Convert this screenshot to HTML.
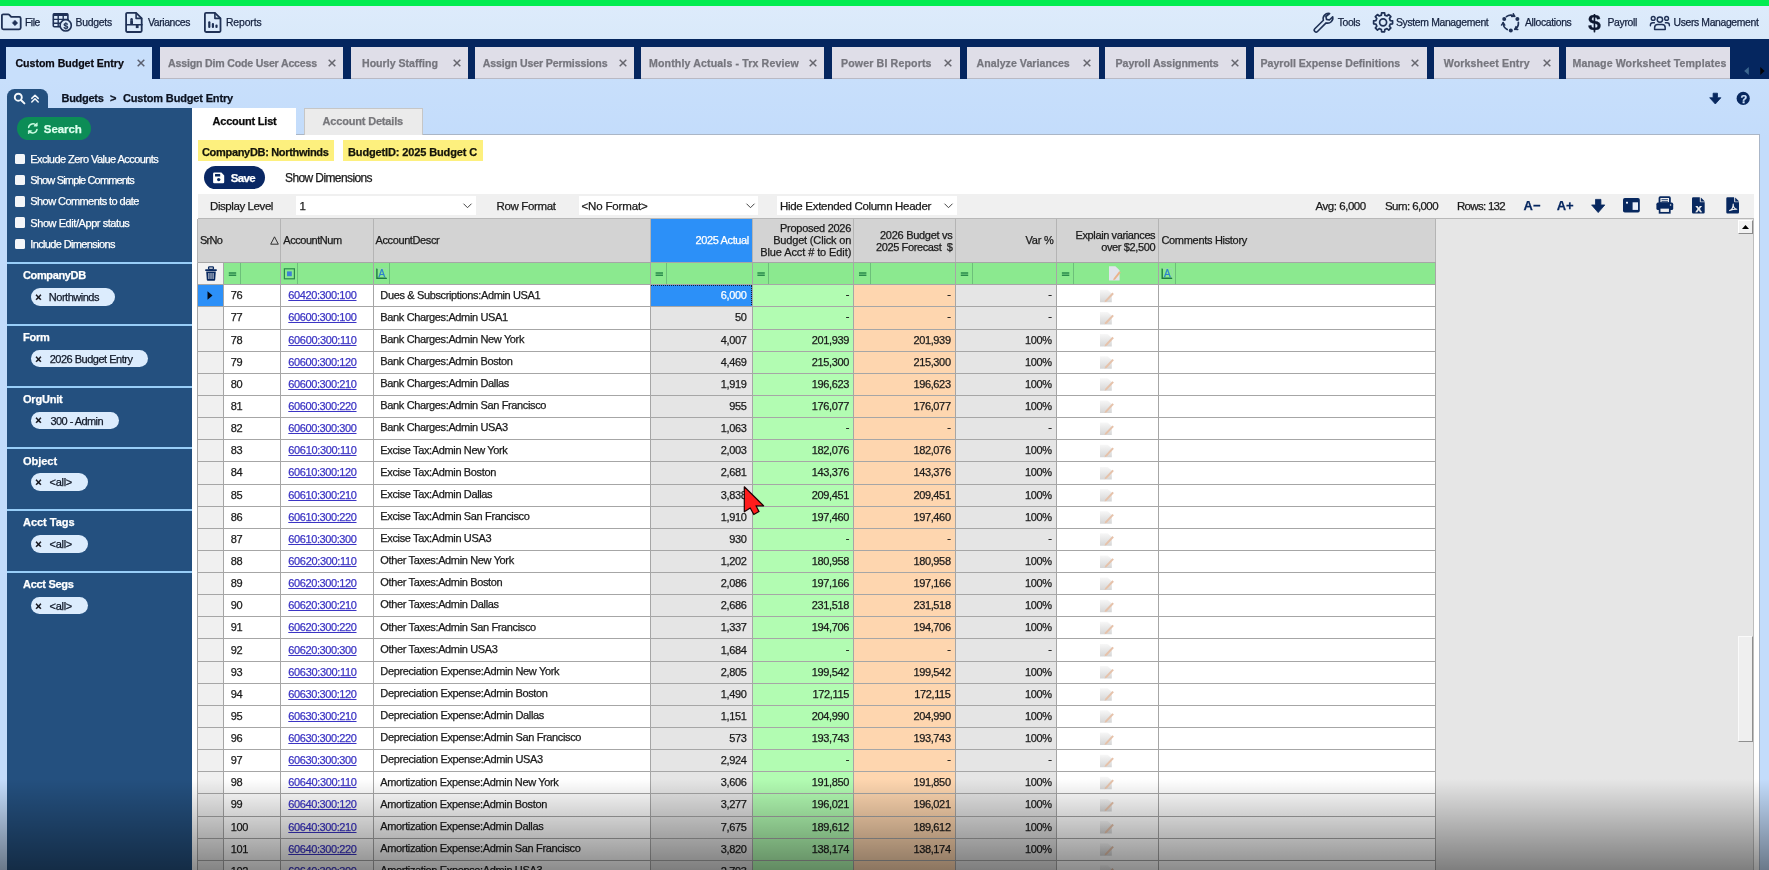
<!DOCTYPE html>
<html lang="en"><head><meta charset="utf-8"><title>Custom Budget Entry</title>
<style>
html,body{margin:0;padding:0;}
body{width:1769px;height:870px;overflow:hidden;position:relative;background:#c3dcf8;font-family:"Liberation Sans",sans-serif;will-change:transform;}
.t{position:absolute;white-space:pre;-webkit-text-stroke:0.25px currentColor;}
.r{position:absolute;box-sizing:border-box;}
svg{position:absolute;overflow:visible;}
a.t{text-decoration:underline;}
</style></head><body>
<div class="r" style="left:0.00px;top:0.00px;width:1769.00px;height:6.00px;background:#03ec50;"></div>
<div class="r" style="left:0.00px;top:6.00px;width:1769.00px;height:33.00px;background:linear-gradient(#ddebfb,#d9e9fa);"></div>
<span class="t " style="top:16.40px;font-size:10.4px;line-height:14.4px;color:#15223f;letter-spacing:-0.514px;left:25.00px;">File</span>
<span class="t " style="top:16.40px;font-size:10.4px;line-height:14.4px;color:#15223f;letter-spacing:-0.237px;left:75.50px;">Budgets</span>
<span class="t " style="top:16.40px;font-size:10.4px;line-height:14.4px;color:#15223f;letter-spacing:-0.386px;left:148.00px;">Variances</span>
<span class="t " style="top:16.40px;font-size:10.4px;line-height:14.4px;color:#15223f;letter-spacing:-0.130px;left:226.00px;">Reports</span>
<span class="t " style="top:16.40px;font-size:10.4px;line-height:14.4px;color:#15223f;letter-spacing:-0.355px;left:1337.70px;">Tools</span>
<span class="t " style="top:16.40px;font-size:10.4px;line-height:14.4px;color:#15223f;letter-spacing:-0.339px;left:1396.00px;">System Management</span>
<span class="t " style="top:16.40px;font-size:10.4px;line-height:14.4px;color:#15223f;letter-spacing:-0.345px;left:1525.00px;">Allocations</span>
<span class="t " style="top:16.40px;font-size:10.4px;line-height:14.4px;color:#15223f;letter-spacing:-0.327px;left:1607.50px;">Payroll</span>
<span class="t " style="top:16.40px;font-size:10.4px;line-height:14.4px;color:#15223f;letter-spacing:-0.359px;left:1673.50px;">Users Management</span>
<div class="r" style="left:0.00px;top:39.00px;width:1769.00px;height:40.00px;background:#05265f;"></div>
<div class="r" style="left:6.00px;top:46.50px;width:146.00px;height:32.50px;background:#c8dffb;"></div>
<span class="t " style="top:56.00px;font-size:10.6px;line-height:14.6px;color:#0c0c14;font-weight:bold;letter-spacing:-0.034px;left:15.50px;">Custom Budget Entry</span>
<svg style="left:136.5px;top:58.9px" width="8" height="8" viewBox="0 0 8 8"><path d="M0.7 0.7L7.3 7.3M7.3 0.7L0.7 7.3" stroke="#5a5f6e" stroke-width="1.5" fill="none"/></svg>
<div class="r" style="left:159.50px;top:46.50px;width:183.50px;height:32.50px;background:#dfdee8;border-bottom:1px solid #b9b9c4;"></div>
<span class="t " style="top:56.00px;font-size:10.6px;line-height:14.6px;color:#76767e;font-weight:bold;letter-spacing:-0.183px;left:168.00px;">Assign Dim Code User Access</span>
<svg style="left:327.8px;top:58.9px" width="8" height="8" viewBox="0 0 8 8"><path d="M0.7 0.7L7.3 7.3M7.3 0.7L0.7 7.3" stroke="#66666e" stroke-width="1.5" fill="none"/></svg>
<div class="r" style="left:351.00px;top:46.50px;width:117.00px;height:32.50px;background:#dfdee8;border-bottom:1px solid #b9b9c4;"></div>
<span class="t " style="top:56.00px;font-size:10.6px;line-height:14.6px;color:#76767e;font-weight:bold;left:362.00px;">Hourly Staffing</span>
<svg style="left:452.8px;top:58.9px" width="8" height="8" viewBox="0 0 8 8"><path d="M0.7 0.7L7.3 7.3M7.3 0.7L0.7 7.3" stroke="#66666e" stroke-width="1.5" fill="none"/></svg>
<div class="r" style="left:475.00px;top:46.50px;width:159.00px;height:32.50px;background:#dfdee8;border-bottom:1px solid #b9b9c4;"></div>
<span class="t " style="top:56.00px;font-size:10.6px;line-height:14.6px;color:#76767e;font-weight:bold;letter-spacing:-0.132px;left:482.70px;">Assign User Permissions</span>
<svg style="left:618.8px;top:58.9px" width="8" height="8" viewBox="0 0 8 8"><path d="M0.7 0.7L7.3 7.3M7.3 0.7L0.7 7.3" stroke="#66666e" stroke-width="1.5" fill="none"/></svg>
<div class="r" style="left:641.40px;top:46.50px;width:183.10px;height:32.50px;background:#dfdee8;border-bottom:1px solid #b9b9c4;"></div>
<span class="t " style="top:56.00px;font-size:10.6px;line-height:14.6px;color:#76767e;font-weight:bold;letter-spacing:0.133px;left:649.00px;">Monthly Actuals - Trx Review</span>
<svg style="left:808.8px;top:58.9px" width="8" height="8" viewBox="0 0 8 8"><path d="M0.7 0.7L7.3 7.3M7.3 0.7L0.7 7.3" stroke="#66666e" stroke-width="1.5" fill="none"/></svg>
<div class="r" style="left:831.70px;top:46.50px;width:128.30px;height:32.50px;background:#dfdee8;border-bottom:1px solid #b9b9c4;"></div>
<span class="t " style="top:56.00px;font-size:10.6px;line-height:14.6px;color:#76767e;font-weight:bold;letter-spacing:0.147px;left:841.00px;">Power BI Reports</span>
<svg style="left:944.4px;top:58.9px" width="8" height="8" viewBox="0 0 8 8"><path d="M0.7 0.7L7.3 7.3M7.3 0.7L0.7 7.3" stroke="#66666e" stroke-width="1.5" fill="none"/></svg>
<div class="r" style="left:967.40px;top:46.50px;width:131.20px;height:32.50px;background:#dfdee8;border-bottom:1px solid #b9b9c4;"></div>
<span class="t " style="top:56.00px;font-size:10.6px;line-height:14.6px;color:#76767e;font-weight:bold;letter-spacing:0.047px;left:976.50px;">Analyze Variances</span>
<svg style="left:1082.8px;top:58.9px" width="8" height="8" viewBox="0 0 8 8"><path d="M0.7 0.7L7.3 7.3M7.3 0.7L0.7 7.3" stroke="#66666e" stroke-width="1.5" fill="none"/></svg>
<div class="r" style="left:1105.40px;top:46.50px;width:140.60px;height:32.50px;background:#dfdee8;border-bottom:1px solid #b9b9c4;"></div>
<span class="t " style="top:56.00px;font-size:10.6px;line-height:14.6px;color:#76767e;font-weight:bold;letter-spacing:-0.071px;left:1115.60px;">Payroll Assignments</span>
<svg style="left:1230.8px;top:58.9px" width="8" height="8" viewBox="0 0 8 8"><path d="M0.7 0.7L7.3 7.3M7.3 0.7L0.7 7.3" stroke="#66666e" stroke-width="1.5" fill="none"/></svg>
<div class="r" style="left:1253.70px;top:46.50px;width:173.10px;height:32.50px;background:#dfdee8;border-bottom:1px solid #b9b9c4;"></div>
<span class="t " style="top:56.00px;font-size:10.6px;line-height:14.6px;color:#76767e;font-weight:bold;left:1260.50px;">Payroll Expense Definitions</span>
<svg style="left:1410.8px;top:58.9px" width="8" height="8" viewBox="0 0 8 8"><path d="M0.7 0.7L7.3 7.3M7.3 0.7L0.7 7.3" stroke="#66666e" stroke-width="1.5" fill="none"/></svg>
<div class="r" style="left:1434.00px;top:46.50px;width:124.60px;height:32.50px;background:#dfdee8;border-bottom:1px solid #b9b9c4;"></div>
<span class="t " style="top:56.00px;font-size:10.6px;line-height:14.6px;color:#76767e;font-weight:bold;letter-spacing:0.124px;left:1443.80px;">Worksheet Entry</span>
<svg style="left:1542.8px;top:58.9px" width="8" height="8" viewBox="0 0 8 8"><path d="M0.7 0.7L7.3 7.3M7.3 0.7L0.7 7.3" stroke="#66666e" stroke-width="1.5" fill="none"/></svg>
<div class="r" style="left:1566.00px;top:46.50px;width:163.80px;height:32.50px;background:#dfdee8;border-bottom:1px solid #b9b9c4;"></div>
<span class="t " style="top:56.00px;font-size:10.6px;line-height:14.6px;color:#76767e;font-weight:bold;letter-spacing:0.116px;left:1572.50px;">Manage Worksheet Templates</span>
<svg style="left:1742px;top:66px" width="24" height="10" viewBox="0 0 24 10"><path d="M6.8 1L6.8 9L2.2 5Z" fill="#3d6790"/><path d="M18.3 1L18.3 9L22.6 5Z" fill="#02040a"/></svg>
<div class="r" style="left:0.00px;top:79.00px;width:1769.00px;height:791.00px;background:linear-gradient(#c8dffb,#c3dcfb 60px,#c3dcfb);"></div>
<span class="t " style="top:91.10px;font-size:11px;line-height:15px;color:#0b1220;font-weight:bold;letter-spacing:-0.285px;left:61.50px;">Budgets</span>
<span class="t " style="top:91.10px;font-size:11px;line-height:15px;color:#0b1220;font-weight:bold;letter-spacing:1.075px;left:110.00px;">&gt;</span>
<span class="t " style="top:91.10px;font-size:11px;line-height:15px;color:#0b1220;font-weight:bold;letter-spacing:-0.161px;left:123.00px;">Custom Budget Entry</span>
<div class="r" style="left:7.00px;top:89.00px;width:40.50px;height:22.00px;background:#24507f;border-radius:7.5px 7.5px 0 0;"></div>
<div class="r" style="left:7.00px;top:108.00px;width:185.00px;height:762.00px;background:#24507f;"></div>
<div class="r" style="left:17.00px;top:117.00px;width:74.00px;height:22.80px;background:#0c8d56;border-radius:11.5px;"></div>
<span class="t " style="top:121.55px;font-size:11.5px;line-height:15.5px;color:#dcffee;font-weight:bold;letter-spacing:-0.059px;left:43.80px;">Search</span>
<div class="r" style="left:14.50px;top:153.50px;width:10.50px;height:10.50px;background:#f4f6f8;border-radius:1.5px;"></div>
<span class="t " style="top:151.80px;font-size:11px;line-height:15px;color:#fff;letter-spacing:-0.551px;left:30.30px;">Exclude Zero Value Accounts</span>
<div class="r" style="left:14.50px;top:174.75px;width:10.50px;height:10.50px;background:#f4f6f8;border-radius:1.5px;"></div>
<span class="t " style="top:173.05px;font-size:11px;line-height:15px;color:#fff;letter-spacing:-0.836px;left:30.30px;">Show Simple Comments</span>
<div class="r" style="left:14.50px;top:196.00px;width:10.50px;height:10.50px;background:#f4f6f8;border-radius:1.5px;"></div>
<span class="t " style="top:194.30px;font-size:11px;line-height:15px;color:#fff;letter-spacing:-0.573px;left:30.30px;">Show Comments to date</span>
<div class="r" style="left:14.50px;top:217.25px;width:10.50px;height:10.50px;background:#f4f6f8;border-radius:1.5px;"></div>
<span class="t " style="top:215.55px;font-size:11px;line-height:15px;color:#fff;letter-spacing:-0.434px;left:30.30px;">Show Edit/Appr status</span>
<div class="r" style="left:14.50px;top:238.50px;width:10.50px;height:10.50px;background:#f4f6f8;border-radius:1.5px;"></div>
<span class="t " style="top:236.80px;font-size:11px;line-height:15px;color:#fff;letter-spacing:-0.638px;left:30.30px;">Include Dimensions</span>
<div class="r" style="left:7.00px;top:262.00px;width:185.00px;height:2.00px;background:#98cef8;"></div>
<span class="t " style="top:268.30px;font-size:11px;line-height:15px;color:#fff;font-weight:bold;letter-spacing:-0.367px;left:23.00px;">CompanyDB</span>
<div class="r" style="left:31.00px;top:288.10px;width:84.00px;height:17.60px;background:#dcecfd;border-radius:9px;"></div>
<span class="t " style="top:289.80px;font-size:11px;line-height:15px;color:#0a0a12;font-weight:bold;left:35.20px;">×</span>
<span class="t " style="top:290.20px;font-size:11px;line-height:15px;color:#101828;letter-spacing:-0.482px;left:48.80px;">Northwinds</span>
<div class="r" style="left:7.00px;top:323.50px;width:185.00px;height:2.00px;background:#98cef8;"></div>
<span class="t " style="top:330.04px;font-size:11px;line-height:15px;color:#fff;font-weight:bold;letter-spacing:-0.250px;left:23.00px;">Form</span>
<div class="r" style="left:31.00px;top:349.84px;width:117.30px;height:17.60px;background:#dcecfd;border-radius:9px;"></div>
<span class="t " style="top:351.54px;font-size:11px;line-height:15px;color:#0a0a12;font-weight:bold;left:35.20px;">×</span>
<span class="t " style="top:351.94px;font-size:11px;line-height:15px;color:#101828;letter-spacing:-0.495px;left:49.70px;">2026 Budget Entry</span>
<div class="r" style="left:7.00px;top:385.50px;width:185.00px;height:2.00px;background:#98cef8;"></div>
<span class="t " style="top:391.78px;font-size:11px;line-height:15px;color:#fff;font-weight:bold;letter-spacing:-0.205px;left:23.00px;">OrgUnit</span>
<div class="r" style="left:31.00px;top:411.58px;width:87.60px;height:17.60px;background:#dcecfd;border-radius:9px;"></div>
<span class="t " style="top:413.28px;font-size:11px;line-height:15px;color:#0a0a12;font-weight:bold;left:35.20px;">×</span>
<span class="t " style="top:413.68px;font-size:11px;line-height:15px;color:#101828;letter-spacing:-0.563px;left:50.50px;">300 - Admin</span>
<div class="r" style="left:7.00px;top:447.00px;width:185.00px;height:2.00px;background:#98cef8;"></div>
<span class="t " style="top:453.52px;font-size:11px;line-height:15px;color:#fff;font-weight:bold;letter-spacing:-0.038px;left:23.00px;">Object</span>
<div class="r" style="left:31.00px;top:473.32px;width:57.30px;height:17.60px;background:#dcecfd;border-radius:9px;"></div>
<span class="t " style="top:475.02px;font-size:11px;line-height:15px;color:#0a0a12;font-weight:bold;left:35.20px;">×</span>
<span class="t " style="top:475.42px;font-size:11px;line-height:15px;color:#101828;letter-spacing:-0.271px;left:49.50px;">&lt;all&gt;</span>
<div class="r" style="left:7.00px;top:509.00px;width:185.00px;height:2.00px;background:#98cef8;"></div>
<span class="t " style="top:515.26px;font-size:11px;line-height:15px;color:#fff;font-weight:bold;letter-spacing:-0.028px;left:23.00px;">Acct Tags</span>
<div class="r" style="left:31.00px;top:535.06px;width:57.30px;height:17.60px;background:#dcecfd;border-radius:9px;"></div>
<span class="t " style="top:536.76px;font-size:11px;line-height:15px;color:#0a0a12;font-weight:bold;left:35.20px;">×</span>
<span class="t " style="top:537.16px;font-size:11px;line-height:15px;color:#101828;letter-spacing:-0.271px;left:49.50px;">&lt;all&gt;</span>
<div class="r" style="left:7.00px;top:570.50px;width:185.00px;height:2.00px;background:#98cef8;"></div>
<span class="t " style="top:577.00px;font-size:11px;line-height:15px;color:#fff;font-weight:bold;letter-spacing:-0.299px;left:23.00px;">Acct Segs</span>
<div class="r" style="left:31.00px;top:596.80px;width:57.30px;height:17.60px;background:#dcecfd;border-radius:9px;"></div>
<span class="t " style="top:598.50px;font-size:11px;line-height:15px;color:#0a0a12;font-weight:bold;left:35.20px;">×</span>
<span class="t " style="top:598.90px;font-size:11px;line-height:15px;color:#101828;letter-spacing:-0.271px;left:49.50px;">&lt;all&gt;</span>
<div class="r" style="left:192.00px;top:134.00px;width:1568.00px;height:736.00px;background:#fff;border-top:1px solid #aab6c6;border-right:1px solid #aab6c8;"></div>
<div class="r" style="left:192.00px;top:108.00px;width:103.50px;height:28.00px;background:#fff;"></div>
<span class="t " style="top:114.10px;font-size:11px;line-height:15px;color:#0a0a0a;font-weight:bold;letter-spacing:-0.217px;left:212.50px;">Account List</span>
<div class="r" style="left:303.50px;top:107.50px;width:119.00px;height:27.00px;background:#ebebeb;border:1px solid #c6c6c6;border-bottom:none;"></div>
<span class="t " style="top:114.10px;font-size:11px;line-height:15px;color:#77777b;font-weight:bold;letter-spacing:-0.175px;left:322.50px;">Account Details</span>
<div class="r" style="left:197.50px;top:140.30px;width:136.00px;height:20.80px;background:#fdf07e;"></div>
<span class="t " style="top:144.60px;font-size:11px;line-height:15px;color:#14140a;font-weight:bold;letter-spacing:-0.320px;left:202.00px;">CompanyDB: Northwinds</span>
<div class="r" style="left:343.00px;top:140.30px;width:140.00px;height:20.80px;background:#fdf07e;"></div>
<span class="t " style="top:144.60px;font-size:11px;line-height:15px;color:#14140a;font-weight:bold;letter-spacing:-0.131px;left:348.00px;">BudgetID: 2025 Budget C</span>
<div class="r" style="left:203.80px;top:166.40px;width:61.50px;height:23.00px;background:#0a2864;border-radius:11.5px;"></div>
<span class="t " style="top:171.45px;font-size:11.5px;line-height:15.5px;color:#fff;font-weight:bold;letter-spacing:-0.639px;left:230.70px;">Save</span>
<span class="t " style="top:169.90px;font-size:12px;line-height:16px;color:#1a1a1a;letter-spacing:-0.602px;left:285.00px;">Show Dimensions</span>
<div class="r" style="left:197.50px;top:193.60px;width:1556.00px;height:25.00px;background:#f0f0f0;"></div>
<span class="t " style="top:199.25px;font-size:11.5px;line-height:15.5px;color:#1a1a1a;letter-spacing:-0.415px;left:210.00px;">Display Level</span>
<div class="r" style="left:296.00px;top:196.20px;width:179.50px;height:19.30px;background:#fff;"></div>
<span class="t " style="top:199.25px;font-size:11.5px;line-height:15.5px;color:#1a1a1a;left:299.50px;">1</span>
<span class="t " style="top:199.25px;font-size:11.5px;line-height:15.5px;color:#1a1a1a;letter-spacing:-0.362px;left:496.50px;">Row Format</span>
<div class="r" style="left:578.50px;top:196.20px;width:179.50px;height:19.30px;background:#fff;"></div>
<span class="t " style="top:199.25px;font-size:11.5px;line-height:15.5px;color:#1a1a1a;letter-spacing:-0.159px;left:581.50px;">&lt;No Format&gt;</span>
<div class="r" style="left:777.00px;top:196.20px;width:180.00px;height:19.30px;background:#fff;"></div>
<span class="t " style="top:199.25px;font-size:11.5px;line-height:15.5px;color:#1a1a1a;letter-spacing:-0.302px;left:780.00px;">Hide Extended Column Header</span>
<svg style="left:462.5px;top:203px" width="9" height="6" viewBox="0 0 9 6"><path d="M0.5 0.7L4.5 4.7L8.5 0.7" stroke="#444" stroke-width="1" fill="none"/></svg>
<svg style="left:745.5px;top:203px" width="9" height="6" viewBox="0 0 9 6"><path d="M0.5 0.7L4.5 4.7L8.5 0.7" stroke="#444" stroke-width="1" fill="none"/></svg>
<svg style="left:944.0px;top:203px" width="9" height="6" viewBox="0 0 9 6"><path d="M0.5 0.7L4.5 4.7L8.5 0.7" stroke="#444" stroke-width="1" fill="none"/></svg>
<span class="t " style="top:199.25px;font-size:11.5px;line-height:15.5px;color:#1a1a1a;letter-spacing:-0.457px;left:1315.50px;">Avg: 6,000</span>
<span class="t " style="top:199.25px;font-size:11.5px;line-height:15.5px;color:#1a1a1a;letter-spacing:-0.581px;left:1385.00px;">Sum: 6,000</span>
<span class="t " style="top:199.25px;font-size:11.5px;line-height:15.5px;color:#1a1a1a;letter-spacing:-0.703px;left:1457.00px;">Rows: 132</span>
<span class="t " style="top:196.90px;font-size:13px;line-height:17px;color:#05265f;font-weight:bold;letter-spacing:0.009px;left:1523.50px;">A−</span>
<span class="t " style="top:196.90px;font-size:13px;line-height:17px;color:#05265f;font-weight:bold;letter-spacing:0.009px;left:1556.70px;">A+</span>
<div class="r" style="left:197.50px;top:218.30px;width:1556.00px;height:652.00px;background:#e6e6e6;border-top:1px solid #b8b8b8;"></div>
<div class="r" style="left:197.50px;top:218.60px;width:1238.00px;height:44.00px;background:#d3d3d3;"></div>
<div class="r" style="left:650.30px;top:218.60px;width:101.70px;height:44.00px;background:#2c90f8;"></div>
<div class="r" style="left:197.50px;top:262.60px;width:1238.00px;height:22.20px;background:#8be98f;"></div>
<div class="r" style="left:197.50px;top:262.60px;width:25.70px;height:22.20px;background:#f2f2f2;"></div>
<div class="r" style="left:240.20px;top:262.60px;width:1.00px;height:22.20px;background:#6dbf7a;"></div>
<div class="r" style="left:297.10px;top:262.60px;width:1.00px;height:22.20px;background:#6dbf7a;"></div>
<div class="r" style="left:389.30px;top:262.60px;width:1.00px;height:22.20px;background:#6dbf7a;"></div>
<div class="r" style="left:666.30px;top:262.60px;width:1.00px;height:22.20px;background:#6dbf7a;"></div>
<div class="r" style="left:768.00px;top:262.60px;width:1.00px;height:22.20px;background:#6dbf7a;"></div>
<div class="r" style="left:869.50px;top:262.60px;width:1.00px;height:22.20px;background:#6dbf7a;"></div>
<div class="r" style="left:971.50px;top:262.60px;width:1.00px;height:22.20px;background:#6dbf7a;"></div>
<div class="r" style="left:1072.70px;top:262.60px;width:1.00px;height:22.20px;background:#6dbf7a;"></div>
<div class="r" style="left:1174.80px;top:262.60px;width:1.00px;height:22.20px;background:#6dbf7a;"></div>
<div class="r" style="left:197.50px;top:284.80px;width:25.70px;height:585.20px;background:#f0f0f0;"></div>
<div class="r" style="left:223.20px;top:284.80px;width:427.10px;height:585.20px;background:#fff;"></div>
<div class="r" style="left:650.30px;top:284.80px;width:101.70px;height:585.20px;background:#e5e5e5;"></div>
<div class="r" style="left:752.00px;top:284.80px;width:101.70px;height:585.20px;background:#b2fcb2;"></div>
<div class="r" style="left:853.70px;top:284.80px;width:101.80px;height:585.20px;background:#fed6af;"></div>
<div class="r" style="left:955.50px;top:284.80px;width:101.30px;height:585.20px;background:#e5e5e5;"></div>
<div class="r" style="left:1056.80px;top:284.80px;width:378.70px;height:585.20px;background:#fff;"></div>
<div class="r" style="left:197.50px;top:284.80px;width:25.70px;height:22.14px;background:#2c90f8;"></div>
<div class="r" style="left:650.30px;top:284.80px;width:101.70px;height:22.14px;background:#2c90f8;outline:1px dotted #123;outline-offset:-1px;"></div>
<div class="r" style="left:197.00px;top:218.60px;width:1.00px;height:44.00px;background:#b4b4b4;"></div>
<div class="r" style="left:197.00px;top:262.60px;width:1.00px;height:607.40px;background:#a6a6a6;"></div>
<div class="r" style="left:222.70px;top:262.60px;width:1.00px;height:607.40px;background:#a6a6a6;"></div>
<div class="r" style="left:280.10px;top:218.60px;width:1.00px;height:44.00px;background:#b4b4b4;"></div>
<div class="r" style="left:280.10px;top:262.60px;width:1.00px;height:607.40px;background:#a6a6a6;"></div>
<div class="r" style="left:372.70px;top:218.60px;width:1.00px;height:44.00px;background:#b4b4b4;"></div>
<div class="r" style="left:372.70px;top:262.60px;width:1.00px;height:607.40px;background:#a6a6a6;"></div>
<div class="r" style="left:649.80px;top:218.60px;width:1.00px;height:44.00px;background:#b4b4b4;"></div>
<div class="r" style="left:649.80px;top:262.60px;width:1.00px;height:607.40px;background:#a6a6a6;"></div>
<div class="r" style="left:751.50px;top:218.60px;width:1.00px;height:44.00px;background:#b4b4b4;"></div>
<div class="r" style="left:751.50px;top:262.60px;width:1.00px;height:607.40px;background:#a6a6a6;"></div>
<div class="r" style="left:853.20px;top:218.60px;width:1.00px;height:44.00px;background:#b4b4b4;"></div>
<div class="r" style="left:853.20px;top:262.60px;width:1.00px;height:607.40px;background:#a6a6a6;"></div>
<div class="r" style="left:955.00px;top:218.60px;width:1.00px;height:44.00px;background:#b4b4b4;"></div>
<div class="r" style="left:955.00px;top:262.60px;width:1.00px;height:607.40px;background:#a6a6a6;"></div>
<div class="r" style="left:1056.30px;top:218.60px;width:1.00px;height:44.00px;background:#b4b4b4;"></div>
<div class="r" style="left:1056.30px;top:262.60px;width:1.00px;height:607.40px;background:#a6a6a6;"></div>
<div class="r" style="left:1157.90px;top:218.60px;width:1.00px;height:44.00px;background:#b4b4b4;"></div>
<div class="r" style="left:1157.90px;top:262.60px;width:1.00px;height:607.40px;background:#a6a6a6;"></div>
<div class="r" style="left:1435.00px;top:218.60px;width:1.00px;height:44.00px;background:#b4b4b4;"></div>
<div class="r" style="left:1435.00px;top:262.60px;width:1.00px;height:607.40px;background:#a6a6a6;"></div>
<div class="r" style="left:197.50px;top:262.10px;width:1238.00px;height:1.00px;background:#a6a6a6;"></div>
<div class="r" style="left:197.50px;top:284.30px;width:1238.00px;height:1.00px;background:#a6a6a6;"></div>
<div class="r" style="left:197.50px;top:306.44px;width:1238.00px;height:1.00px;background:#a6a6a6;"></div>
<div class="r" style="left:197.50px;top:328.57px;width:1238.00px;height:1.00px;background:#a6a6a6;"></div>
<div class="r" style="left:197.50px;top:350.71px;width:1238.00px;height:1.00px;background:#a6a6a6;"></div>
<div class="r" style="left:197.50px;top:372.84px;width:1238.00px;height:1.00px;background:#a6a6a6;"></div>
<div class="r" style="left:197.50px;top:394.98px;width:1238.00px;height:1.00px;background:#a6a6a6;"></div>
<div class="r" style="left:197.50px;top:417.11px;width:1238.00px;height:1.00px;background:#a6a6a6;"></div>
<div class="r" style="left:197.50px;top:439.25px;width:1238.00px;height:1.00px;background:#a6a6a6;"></div>
<div class="r" style="left:197.50px;top:461.38px;width:1238.00px;height:1.00px;background:#a6a6a6;"></div>
<div class="r" style="left:197.50px;top:483.51px;width:1238.00px;height:1.00px;background:#a6a6a6;"></div>
<div class="r" style="left:197.50px;top:505.65px;width:1238.00px;height:1.00px;background:#a6a6a6;"></div>
<div class="r" style="left:197.50px;top:527.79px;width:1238.00px;height:1.00px;background:#a6a6a6;"></div>
<div class="r" style="left:197.50px;top:549.92px;width:1238.00px;height:1.00px;background:#a6a6a6;"></div>
<div class="r" style="left:197.50px;top:572.06px;width:1238.00px;height:1.00px;background:#a6a6a6;"></div>
<div class="r" style="left:197.50px;top:594.19px;width:1238.00px;height:1.00px;background:#a6a6a6;"></div>
<div class="r" style="left:197.50px;top:616.33px;width:1238.00px;height:1.00px;background:#a6a6a6;"></div>
<div class="r" style="left:197.50px;top:638.46px;width:1238.00px;height:1.00px;background:#a6a6a6;"></div>
<div class="r" style="left:197.50px;top:660.60px;width:1238.00px;height:1.00px;background:#a6a6a6;"></div>
<div class="r" style="left:197.50px;top:682.73px;width:1238.00px;height:1.00px;background:#a6a6a6;"></div>
<div class="r" style="left:197.50px;top:704.87px;width:1238.00px;height:1.00px;background:#a6a6a6;"></div>
<div class="r" style="left:197.50px;top:727.00px;width:1238.00px;height:1.00px;background:#a6a6a6;"></div>
<div class="r" style="left:197.50px;top:749.13px;width:1238.00px;height:1.00px;background:#a6a6a6;"></div>
<div class="r" style="left:197.50px;top:771.27px;width:1238.00px;height:1.00px;background:#a6a6a6;"></div>
<div class="r" style="left:197.50px;top:793.40px;width:1238.00px;height:1.00px;background:#a6a6a6;"></div>
<div class="r" style="left:197.50px;top:815.54px;width:1238.00px;height:1.00px;background:#a6a6a6;"></div>
<div class="r" style="left:197.50px;top:837.67px;width:1238.00px;height:1.00px;background:#a6a6a6;"></div>
<div class="r" style="left:197.50px;top:859.81px;width:1238.00px;height:1.00px;background:#a6a6a6;"></div>
<div class="r" style="left:197.50px;top:881.95px;width:1238.00px;height:1.00px;background:#a6a6a6;"></div>
<span class="t " style="top:233.10px;font-size:11px;line-height:15px;color:#1a1a1a;letter-spacing:-0.765px;left:200.00px;">SrNo</span>
<svg style="left:270.4px;top:236px" width="9" height="9" viewBox="0 0 9 9"><path d="M4.5 0.8L8.3 8.2L0.7 8.2Z" stroke="#222" stroke-width="0.9" fill="none"/></svg>
<span class="t " style="top:233.10px;font-size:11px;line-height:15px;color:#1a1a1a;letter-spacing:-0.467px;left:283.30px;">AccountNum</span>
<span class="t " style="top:233.10px;font-size:11px;line-height:15px;color:#1a1a1a;letter-spacing:-0.389px;left:375.50px;">AccountDescr</span>
<span class="t " style="top:233.10px;font-size:11px;line-height:15px;color:#fff;letter-spacing:-0.390px;right:1020.19px;">2025 Actual</span>
<span class="t " style="top:220.60px;font-size:11px;line-height:15px;color:#1a1a1a;letter-spacing:-0.278px;right:917.98px;">Proposed 2026</span>
<span class="t " style="top:232.70px;font-size:11px;line-height:15px;color:#1a1a1a;letter-spacing:-0.169px;right:917.87px;">Budget (Click on</span>
<span class="t " style="top:245.40px;font-size:11px;line-height:15px;color:#1a1a1a;letter-spacing:-0.097px;right:917.80px;">Blue Acct # to Edit)</span>
<span class="t " style="top:227.70px;font-size:11px;line-height:15px;color:#1a1a1a;letter-spacing:-0.282px;right:816.48px;">2026 Budget vs</span>
<span class="t " style="top:239.50px;font-size:11px;line-height:15px;color:#1a1a1a;letter-spacing:-0.384px;right:816.58px;">2025 Forecast  $</span>
<span class="t " style="top:233.10px;font-size:11px;line-height:15px;color:#1a1a1a;letter-spacing:-0.228px;right:715.43px;">Var %</span>
<span class="t " style="top:228.10px;font-size:11px;line-height:15px;color:#1a1a1a;letter-spacing:-0.383px;right:613.78px;">Explain variances</span>
<span class="t " style="top:240.10px;font-size:11px;line-height:15px;color:#1a1a1a;letter-spacing:-0.372px;right:613.77px;">over $2,500</span>
<span class="t " style="top:233.10px;font-size:11px;line-height:15px;color:#1a1a1a;letter-spacing:-0.304px;left:1161.40px;">Comments History</span>
<span class="t " style="top:288.35px;font-size:11px;line-height:15px;color:#1a1a1a;letter-spacing:-0.360px;left:230.70px;">76</span>
<span class="t " style="top:288.35px;font-size:11px;line-height:15px;color:#3b34c4;letter-spacing:-0.400px;left:288.30px;text-decoration:underline;">60420:300:100</span>
<span class="t " style="top:287.55px;font-size:11px;line-height:15px;color:#1a1a1a;letter-spacing:-0.360px;left:380.30px;">Dues &amp; Subscriptions:Admin USA1</span>
<span class="t " style="top:288.35px;font-size:11px;line-height:15px;color:#fff;letter-spacing:-0.360px;right:1022.46px;">6,000</span>
<span class="t " style="top:287.35px;font-size:11px;line-height:15px;color:#1a1a1a;letter-spacing:-0.360px;right:920.06px;">-</span>
<span class="t " style="top:287.35px;font-size:11px;line-height:15px;color:#1a1a1a;letter-spacing:-0.360px;right:818.36px;">-</span>
<span class="t " style="top:287.35px;font-size:11px;line-height:15px;color:#1a1a1a;letter-spacing:-0.360px;right:717.36px;">-</span>
<span class="t " style="top:310.49px;font-size:11px;line-height:15px;color:#1a1a1a;letter-spacing:-0.360px;left:230.70px;">77</span>
<span class="t " style="top:310.49px;font-size:11px;line-height:15px;color:#3b34c4;letter-spacing:-0.400px;left:288.30px;text-decoration:underline;">60600:300:100</span>
<span class="t " style="top:309.69px;font-size:11px;line-height:15px;color:#1a1a1a;letter-spacing:-0.360px;left:380.30px;">Bank Charges:Admin USA1</span>
<span class="t " style="top:310.49px;font-size:11px;line-height:15px;color:#1a1a1a;letter-spacing:-0.360px;right:1022.46px;">50</span>
<span class="t " style="top:309.49px;font-size:11px;line-height:15px;color:#1a1a1a;letter-spacing:-0.360px;right:920.06px;">-</span>
<span class="t " style="top:309.49px;font-size:11px;line-height:15px;color:#1a1a1a;letter-spacing:-0.360px;right:818.36px;">-</span>
<span class="t " style="top:309.49px;font-size:11px;line-height:15px;color:#1a1a1a;letter-spacing:-0.360px;right:717.36px;">-</span>
<span class="t " style="top:332.62px;font-size:11px;line-height:15px;color:#1a1a1a;letter-spacing:-0.360px;left:230.70px;">78</span>
<span class="t " style="top:332.62px;font-size:11px;line-height:15px;color:#3b34c4;letter-spacing:-0.337px;left:288.30px;text-decoration:underline;">60600:300:110</span>
<span class="t " style="top:331.82px;font-size:11px;line-height:15px;color:#1a1a1a;letter-spacing:-0.360px;left:380.30px;">Bank Charges:Admin New York</span>
<span class="t " style="top:332.62px;font-size:11px;line-height:15px;color:#1a1a1a;letter-spacing:-0.360px;right:1022.46px;">4,007</span>
<span class="t " style="top:332.62px;font-size:11px;line-height:15px;color:#1a1a1a;letter-spacing:-0.360px;right:920.06px;">201,939</span>
<span class="t " style="top:332.62px;font-size:11px;line-height:15px;color:#1a1a1a;letter-spacing:-0.360px;right:818.36px;">201,939</span>
<span class="t " style="top:332.62px;font-size:11px;line-height:15px;color:#1a1a1a;letter-spacing:-0.360px;right:717.36px;">100%</span>
<span class="t " style="top:354.76px;font-size:11px;line-height:15px;color:#1a1a1a;letter-spacing:-0.360px;left:230.70px;">79</span>
<span class="t " style="top:354.76px;font-size:11px;line-height:15px;color:#3b34c4;letter-spacing:-0.400px;left:288.30px;text-decoration:underline;">60600:300:120</span>
<span class="t " style="top:353.96px;font-size:11px;line-height:15px;color:#1a1a1a;letter-spacing:-0.360px;left:380.30px;">Bank Charges:Admin Boston</span>
<span class="t " style="top:354.76px;font-size:11px;line-height:15px;color:#1a1a1a;letter-spacing:-0.360px;right:1022.46px;">4,469</span>
<span class="t " style="top:354.76px;font-size:11px;line-height:15px;color:#1a1a1a;letter-spacing:-0.360px;right:920.06px;">215,300</span>
<span class="t " style="top:354.76px;font-size:11px;line-height:15px;color:#1a1a1a;letter-spacing:-0.360px;right:818.36px;">215,300</span>
<span class="t " style="top:354.76px;font-size:11px;line-height:15px;color:#1a1a1a;letter-spacing:-0.360px;right:717.36px;">100%</span>
<span class="t " style="top:376.89px;font-size:11px;line-height:15px;color:#1a1a1a;letter-spacing:-0.360px;left:230.70px;">80</span>
<span class="t " style="top:376.89px;font-size:11px;line-height:15px;color:#3b34c4;letter-spacing:-0.400px;left:288.30px;text-decoration:underline;">60600:300:210</span>
<span class="t " style="top:376.09px;font-size:11px;line-height:15px;color:#1a1a1a;letter-spacing:-0.360px;left:380.30px;">Bank Charges:Admin Dallas</span>
<span class="t " style="top:376.89px;font-size:11px;line-height:15px;color:#1a1a1a;letter-spacing:-0.360px;right:1022.46px;">1,919</span>
<span class="t " style="top:376.89px;font-size:11px;line-height:15px;color:#1a1a1a;letter-spacing:-0.360px;right:920.06px;">196,623</span>
<span class="t " style="top:376.89px;font-size:11px;line-height:15px;color:#1a1a1a;letter-spacing:-0.360px;right:818.36px;">196,623</span>
<span class="t " style="top:376.89px;font-size:11px;line-height:15px;color:#1a1a1a;letter-spacing:-0.360px;right:717.36px;">100%</span>
<span class="t " style="top:399.03px;font-size:11px;line-height:15px;color:#1a1a1a;letter-spacing:-0.360px;left:230.70px;">81</span>
<span class="t " style="top:399.03px;font-size:11px;line-height:15px;color:#3b34c4;letter-spacing:-0.400px;left:288.30px;text-decoration:underline;">60600:300:220</span>
<span class="t " style="top:398.23px;font-size:11px;line-height:15px;color:#1a1a1a;letter-spacing:-0.360px;left:380.30px;">Bank Charges:Admin San Francisco</span>
<span class="t " style="top:399.03px;font-size:11px;line-height:15px;color:#1a1a1a;letter-spacing:-0.360px;right:1022.46px;">955</span>
<span class="t " style="top:399.03px;font-size:11px;line-height:15px;color:#1a1a1a;letter-spacing:-0.360px;right:920.06px;">176,077</span>
<span class="t " style="top:399.03px;font-size:11px;line-height:15px;color:#1a1a1a;letter-spacing:-0.360px;right:818.36px;">176,077</span>
<span class="t " style="top:399.03px;font-size:11px;line-height:15px;color:#1a1a1a;letter-spacing:-0.360px;right:717.36px;">100%</span>
<span class="t " style="top:421.16px;font-size:11px;line-height:15px;color:#1a1a1a;letter-spacing:-0.360px;left:230.70px;">82</span>
<span class="t " style="top:421.16px;font-size:11px;line-height:15px;color:#3b34c4;letter-spacing:-0.400px;left:288.30px;text-decoration:underline;">60600:300:300</span>
<span class="t " style="top:420.36px;font-size:11px;line-height:15px;color:#1a1a1a;letter-spacing:-0.360px;left:380.30px;">Bank Charges:Admin USA3</span>
<span class="t " style="top:421.16px;font-size:11px;line-height:15px;color:#1a1a1a;letter-spacing:-0.360px;right:1022.46px;">1,063</span>
<span class="t " style="top:420.16px;font-size:11px;line-height:15px;color:#1a1a1a;letter-spacing:-0.360px;right:920.06px;">-</span>
<span class="t " style="top:420.16px;font-size:11px;line-height:15px;color:#1a1a1a;letter-spacing:-0.360px;right:818.36px;">-</span>
<span class="t " style="top:420.16px;font-size:11px;line-height:15px;color:#1a1a1a;letter-spacing:-0.360px;right:717.36px;">-</span>
<span class="t " style="top:443.30px;font-size:11px;line-height:15px;color:#1a1a1a;letter-spacing:-0.360px;left:230.70px;">83</span>
<span class="t " style="top:443.30px;font-size:11px;line-height:15px;color:#3b34c4;letter-spacing:-0.337px;left:288.30px;text-decoration:underline;">60610:300:110</span>
<span class="t " style="top:442.50px;font-size:11px;line-height:15px;color:#1a1a1a;letter-spacing:-0.360px;left:380.30px;">Excise Tax:Admin New York</span>
<span class="t " style="top:443.30px;font-size:11px;line-height:15px;color:#1a1a1a;letter-spacing:-0.360px;right:1022.46px;">2,003</span>
<span class="t " style="top:443.30px;font-size:11px;line-height:15px;color:#1a1a1a;letter-spacing:-0.360px;right:920.06px;">182,076</span>
<span class="t " style="top:443.30px;font-size:11px;line-height:15px;color:#1a1a1a;letter-spacing:-0.360px;right:818.36px;">182,076</span>
<span class="t " style="top:443.30px;font-size:11px;line-height:15px;color:#1a1a1a;letter-spacing:-0.360px;right:717.36px;">100%</span>
<span class="t " style="top:465.43px;font-size:11px;line-height:15px;color:#1a1a1a;letter-spacing:-0.360px;left:230.70px;">84</span>
<span class="t " style="top:465.43px;font-size:11px;line-height:15px;color:#3b34c4;letter-spacing:-0.400px;left:288.30px;text-decoration:underline;">60610:300:120</span>
<span class="t " style="top:464.63px;font-size:11px;line-height:15px;color:#1a1a1a;letter-spacing:-0.360px;left:380.30px;">Excise Tax:Admin Boston</span>
<span class="t " style="top:465.43px;font-size:11px;line-height:15px;color:#1a1a1a;letter-spacing:-0.360px;right:1022.46px;">2,681</span>
<span class="t " style="top:465.43px;font-size:11px;line-height:15px;color:#1a1a1a;letter-spacing:-0.360px;right:920.06px;">143,376</span>
<span class="t " style="top:465.43px;font-size:11px;line-height:15px;color:#1a1a1a;letter-spacing:-0.360px;right:818.36px;">143,376</span>
<span class="t " style="top:465.43px;font-size:11px;line-height:15px;color:#1a1a1a;letter-spacing:-0.360px;right:717.36px;">100%</span>
<span class="t " style="top:487.56px;font-size:11px;line-height:15px;color:#1a1a1a;letter-spacing:-0.360px;left:230.70px;">85</span>
<span class="t " style="top:487.56px;font-size:11px;line-height:15px;color:#3b34c4;letter-spacing:-0.400px;left:288.30px;text-decoration:underline;">60610:300:210</span>
<span class="t " style="top:486.76px;font-size:11px;line-height:15px;color:#1a1a1a;letter-spacing:-0.360px;left:380.30px;">Excise Tax:Admin Dallas</span>
<span class="t " style="top:487.56px;font-size:11px;line-height:15px;color:#1a1a1a;letter-spacing:-0.360px;right:1022.46px;">3,838</span>
<span class="t " style="top:487.56px;font-size:11px;line-height:15px;color:#1a1a1a;letter-spacing:-0.360px;right:920.06px;">209,451</span>
<span class="t " style="top:487.56px;font-size:11px;line-height:15px;color:#1a1a1a;letter-spacing:-0.360px;right:818.36px;">209,451</span>
<span class="t " style="top:487.56px;font-size:11px;line-height:15px;color:#1a1a1a;letter-spacing:-0.360px;right:717.36px;">100%</span>
<span class="t " style="top:509.70px;font-size:11px;line-height:15px;color:#1a1a1a;letter-spacing:-0.360px;left:230.70px;">86</span>
<span class="t " style="top:509.70px;font-size:11px;line-height:15px;color:#3b34c4;letter-spacing:-0.400px;left:288.30px;text-decoration:underline;">60610:300:220</span>
<span class="t " style="top:508.90px;font-size:11px;line-height:15px;color:#1a1a1a;letter-spacing:-0.360px;left:380.30px;">Excise Tax:Admin San Francisco</span>
<span class="t " style="top:509.70px;font-size:11px;line-height:15px;color:#1a1a1a;letter-spacing:-0.360px;right:1022.46px;">1,910</span>
<span class="t " style="top:509.70px;font-size:11px;line-height:15px;color:#1a1a1a;letter-spacing:-0.360px;right:920.06px;">197,460</span>
<span class="t " style="top:509.70px;font-size:11px;line-height:15px;color:#1a1a1a;letter-spacing:-0.360px;right:818.36px;">197,460</span>
<span class="t " style="top:509.70px;font-size:11px;line-height:15px;color:#1a1a1a;letter-spacing:-0.360px;right:717.36px;">100%</span>
<span class="t " style="top:531.84px;font-size:11px;line-height:15px;color:#1a1a1a;letter-spacing:-0.360px;left:230.70px;">87</span>
<span class="t " style="top:531.84px;font-size:11px;line-height:15px;color:#3b34c4;letter-spacing:-0.400px;left:288.30px;text-decoration:underline;">60610:300:300</span>
<span class="t " style="top:531.04px;font-size:11px;line-height:15px;color:#1a1a1a;letter-spacing:-0.360px;left:380.30px;">Excise Tax:Admin USA3</span>
<span class="t " style="top:531.84px;font-size:11px;line-height:15px;color:#1a1a1a;letter-spacing:-0.360px;right:1022.46px;">930</span>
<span class="t " style="top:530.84px;font-size:11px;line-height:15px;color:#1a1a1a;letter-spacing:-0.360px;right:920.06px;">-</span>
<span class="t " style="top:530.84px;font-size:11px;line-height:15px;color:#1a1a1a;letter-spacing:-0.360px;right:818.36px;">-</span>
<span class="t " style="top:530.84px;font-size:11px;line-height:15px;color:#1a1a1a;letter-spacing:-0.360px;right:717.36px;">-</span>
<span class="t " style="top:553.97px;font-size:11px;line-height:15px;color:#1a1a1a;letter-spacing:-0.360px;left:230.70px;">88</span>
<span class="t " style="top:553.97px;font-size:11px;line-height:15px;color:#3b34c4;letter-spacing:-0.337px;left:288.30px;text-decoration:underline;">60620:300:110</span>
<span class="t " style="top:553.17px;font-size:11px;line-height:15px;color:#1a1a1a;letter-spacing:-0.360px;left:380.30px;">Other Taxes:Admin New York</span>
<span class="t " style="top:553.97px;font-size:11px;line-height:15px;color:#1a1a1a;letter-spacing:-0.360px;right:1022.46px;">1,202</span>
<span class="t " style="top:553.97px;font-size:11px;line-height:15px;color:#1a1a1a;letter-spacing:-0.360px;right:920.06px;">180,958</span>
<span class="t " style="top:553.97px;font-size:11px;line-height:15px;color:#1a1a1a;letter-spacing:-0.360px;right:818.36px;">180,958</span>
<span class="t " style="top:553.97px;font-size:11px;line-height:15px;color:#1a1a1a;letter-spacing:-0.360px;right:717.36px;">100%</span>
<span class="t " style="top:576.11px;font-size:11px;line-height:15px;color:#1a1a1a;letter-spacing:-0.360px;left:230.70px;">89</span>
<span class="t " style="top:576.11px;font-size:11px;line-height:15px;color:#3b34c4;letter-spacing:-0.400px;left:288.30px;text-decoration:underline;">60620:300:120</span>
<span class="t " style="top:575.31px;font-size:11px;line-height:15px;color:#1a1a1a;letter-spacing:-0.360px;left:380.30px;">Other Taxes:Admin Boston</span>
<span class="t " style="top:576.11px;font-size:11px;line-height:15px;color:#1a1a1a;letter-spacing:-0.360px;right:1022.46px;">2,086</span>
<span class="t " style="top:576.11px;font-size:11px;line-height:15px;color:#1a1a1a;letter-spacing:-0.360px;right:920.06px;">197,166</span>
<span class="t " style="top:576.11px;font-size:11px;line-height:15px;color:#1a1a1a;letter-spacing:-0.360px;right:818.36px;">197,166</span>
<span class="t " style="top:576.11px;font-size:11px;line-height:15px;color:#1a1a1a;letter-spacing:-0.360px;right:717.36px;">100%</span>
<span class="t " style="top:598.24px;font-size:11px;line-height:15px;color:#1a1a1a;letter-spacing:-0.360px;left:230.70px;">90</span>
<span class="t " style="top:598.24px;font-size:11px;line-height:15px;color:#3b34c4;letter-spacing:-0.400px;left:288.30px;text-decoration:underline;">60620:300:210</span>
<span class="t " style="top:597.44px;font-size:11px;line-height:15px;color:#1a1a1a;letter-spacing:-0.360px;left:380.30px;">Other Taxes:Admin Dallas</span>
<span class="t " style="top:598.24px;font-size:11px;line-height:15px;color:#1a1a1a;letter-spacing:-0.360px;right:1022.46px;">2,686</span>
<span class="t " style="top:598.24px;font-size:11px;line-height:15px;color:#1a1a1a;letter-spacing:-0.360px;right:920.06px;">231,518</span>
<span class="t " style="top:598.24px;font-size:11px;line-height:15px;color:#1a1a1a;letter-spacing:-0.360px;right:818.36px;">231,518</span>
<span class="t " style="top:598.24px;font-size:11px;line-height:15px;color:#1a1a1a;letter-spacing:-0.360px;right:717.36px;">100%</span>
<span class="t " style="top:620.38px;font-size:11px;line-height:15px;color:#1a1a1a;letter-spacing:-0.360px;left:230.70px;">91</span>
<span class="t " style="top:620.38px;font-size:11px;line-height:15px;color:#3b34c4;letter-spacing:-0.400px;left:288.30px;text-decoration:underline;">60620:300:220</span>
<span class="t " style="top:619.58px;font-size:11px;line-height:15px;color:#1a1a1a;letter-spacing:-0.360px;left:380.30px;">Other Taxes:Admin San Francisco</span>
<span class="t " style="top:620.38px;font-size:11px;line-height:15px;color:#1a1a1a;letter-spacing:-0.360px;right:1022.46px;">1,337</span>
<span class="t " style="top:620.38px;font-size:11px;line-height:15px;color:#1a1a1a;letter-spacing:-0.360px;right:920.06px;">194,706</span>
<span class="t " style="top:620.38px;font-size:11px;line-height:15px;color:#1a1a1a;letter-spacing:-0.360px;right:818.36px;">194,706</span>
<span class="t " style="top:620.38px;font-size:11px;line-height:15px;color:#1a1a1a;letter-spacing:-0.360px;right:717.36px;">100%</span>
<span class="t " style="top:642.51px;font-size:11px;line-height:15px;color:#1a1a1a;letter-spacing:-0.360px;left:230.70px;">92</span>
<span class="t " style="top:642.51px;font-size:11px;line-height:15px;color:#3b34c4;letter-spacing:-0.400px;left:288.30px;text-decoration:underline;">60620:300:300</span>
<span class="t " style="top:641.71px;font-size:11px;line-height:15px;color:#1a1a1a;letter-spacing:-0.360px;left:380.30px;">Other Taxes:Admin USA3</span>
<span class="t " style="top:642.51px;font-size:11px;line-height:15px;color:#1a1a1a;letter-spacing:-0.360px;right:1022.46px;">1,684</span>
<span class="t " style="top:641.51px;font-size:11px;line-height:15px;color:#1a1a1a;letter-spacing:-0.360px;right:920.06px;">-</span>
<span class="t " style="top:641.51px;font-size:11px;line-height:15px;color:#1a1a1a;letter-spacing:-0.360px;right:818.36px;">-</span>
<span class="t " style="top:641.51px;font-size:11px;line-height:15px;color:#1a1a1a;letter-spacing:-0.360px;right:717.36px;">-</span>
<span class="t " style="top:664.65px;font-size:11px;line-height:15px;color:#1a1a1a;letter-spacing:-0.360px;left:230.70px;">93</span>
<span class="t " style="top:664.65px;font-size:11px;line-height:15px;color:#3b34c4;letter-spacing:-0.337px;left:288.30px;text-decoration:underline;">60630:300:110</span>
<span class="t " style="top:663.85px;font-size:11px;line-height:15px;color:#1a1a1a;letter-spacing:-0.360px;left:380.30px;">Depreciation Expense:Admin New York</span>
<span class="t " style="top:664.65px;font-size:11px;line-height:15px;color:#1a1a1a;letter-spacing:-0.360px;right:1022.46px;">2,805</span>
<span class="t " style="top:664.65px;font-size:11px;line-height:15px;color:#1a1a1a;letter-spacing:-0.360px;right:920.06px;">199,542</span>
<span class="t " style="top:664.65px;font-size:11px;line-height:15px;color:#1a1a1a;letter-spacing:-0.360px;right:818.36px;">199,542</span>
<span class="t " style="top:664.65px;font-size:11px;line-height:15px;color:#1a1a1a;letter-spacing:-0.360px;right:717.36px;">100%</span>
<span class="t " style="top:686.78px;font-size:11px;line-height:15px;color:#1a1a1a;letter-spacing:-0.360px;left:230.70px;">94</span>
<span class="t " style="top:686.78px;font-size:11px;line-height:15px;color:#3b34c4;letter-spacing:-0.400px;left:288.30px;text-decoration:underline;">60630:300:120</span>
<span class="t " style="top:685.98px;font-size:11px;line-height:15px;color:#1a1a1a;letter-spacing:-0.360px;left:380.30px;">Depreciation Expense:Admin Boston</span>
<span class="t " style="top:686.78px;font-size:11px;line-height:15px;color:#1a1a1a;letter-spacing:-0.360px;right:1022.46px;">1,490</span>
<span class="t " style="top:686.78px;font-size:11px;line-height:15px;color:#1a1a1a;letter-spacing:-0.360px;right:920.06px;">172,115</span>
<span class="t " style="top:686.78px;font-size:11px;line-height:15px;color:#1a1a1a;letter-spacing:-0.360px;right:818.36px;">172,115</span>
<span class="t " style="top:686.78px;font-size:11px;line-height:15px;color:#1a1a1a;letter-spacing:-0.360px;right:717.36px;">100%</span>
<span class="t " style="top:708.92px;font-size:11px;line-height:15px;color:#1a1a1a;letter-spacing:-0.360px;left:230.70px;">95</span>
<span class="t " style="top:708.92px;font-size:11px;line-height:15px;color:#3b34c4;letter-spacing:-0.400px;left:288.30px;text-decoration:underline;">60630:300:210</span>
<span class="t " style="top:708.12px;font-size:11px;line-height:15px;color:#1a1a1a;letter-spacing:-0.360px;left:380.30px;">Depreciation Expense:Admin Dallas</span>
<span class="t " style="top:708.92px;font-size:11px;line-height:15px;color:#1a1a1a;letter-spacing:-0.360px;right:1022.46px;">1,151</span>
<span class="t " style="top:708.92px;font-size:11px;line-height:15px;color:#1a1a1a;letter-spacing:-0.360px;right:920.06px;">204,990</span>
<span class="t " style="top:708.92px;font-size:11px;line-height:15px;color:#1a1a1a;letter-spacing:-0.360px;right:818.36px;">204,990</span>
<span class="t " style="top:708.92px;font-size:11px;line-height:15px;color:#1a1a1a;letter-spacing:-0.360px;right:717.36px;">100%</span>
<span class="t " style="top:731.05px;font-size:11px;line-height:15px;color:#1a1a1a;letter-spacing:-0.360px;left:230.70px;">96</span>
<span class="t " style="top:731.05px;font-size:11px;line-height:15px;color:#3b34c4;letter-spacing:-0.400px;left:288.30px;text-decoration:underline;">60630:300:220</span>
<span class="t " style="top:730.25px;font-size:11px;line-height:15px;color:#1a1a1a;letter-spacing:-0.360px;left:380.30px;">Depreciation Expense:Admin San Francisco</span>
<span class="t " style="top:731.05px;font-size:11px;line-height:15px;color:#1a1a1a;letter-spacing:-0.360px;right:1022.46px;">573</span>
<span class="t " style="top:731.05px;font-size:11px;line-height:15px;color:#1a1a1a;letter-spacing:-0.360px;right:920.06px;">193,743</span>
<span class="t " style="top:731.05px;font-size:11px;line-height:15px;color:#1a1a1a;letter-spacing:-0.360px;right:818.36px;">193,743</span>
<span class="t " style="top:731.05px;font-size:11px;line-height:15px;color:#1a1a1a;letter-spacing:-0.360px;right:717.36px;">100%</span>
<span class="t " style="top:753.19px;font-size:11px;line-height:15px;color:#1a1a1a;letter-spacing:-0.360px;left:230.70px;">97</span>
<span class="t " style="top:753.19px;font-size:11px;line-height:15px;color:#3b34c4;letter-spacing:-0.400px;left:288.30px;text-decoration:underline;">60630:300:300</span>
<span class="t " style="top:752.39px;font-size:11px;line-height:15px;color:#1a1a1a;letter-spacing:-0.360px;left:380.30px;">Depreciation Expense:Admin USA3</span>
<span class="t " style="top:753.19px;font-size:11px;line-height:15px;color:#1a1a1a;letter-spacing:-0.360px;right:1022.46px;">2,924</span>
<span class="t " style="top:752.19px;font-size:11px;line-height:15px;color:#1a1a1a;letter-spacing:-0.360px;right:920.06px;">-</span>
<span class="t " style="top:752.19px;font-size:11px;line-height:15px;color:#1a1a1a;letter-spacing:-0.360px;right:818.36px;">-</span>
<span class="t " style="top:752.19px;font-size:11px;line-height:15px;color:#1a1a1a;letter-spacing:-0.360px;right:717.36px;">-</span>
<span class="t " style="top:775.32px;font-size:11px;line-height:15px;color:#1a1a1a;letter-spacing:-0.360px;left:230.70px;">98</span>
<span class="t " style="top:775.32px;font-size:11px;line-height:15px;color:#3b34c4;letter-spacing:-0.337px;left:288.30px;text-decoration:underline;">60640:300:110</span>
<span class="t " style="top:774.52px;font-size:11px;line-height:15px;color:#1a1a1a;letter-spacing:-0.360px;left:380.30px;">Amortization Expense:Admin New York</span>
<span class="t " style="top:775.32px;font-size:11px;line-height:15px;color:#1a1a1a;letter-spacing:-0.360px;right:1022.46px;">3,606</span>
<span class="t " style="top:775.32px;font-size:11px;line-height:15px;color:#1a1a1a;letter-spacing:-0.360px;right:920.06px;">191,850</span>
<span class="t " style="top:775.32px;font-size:11px;line-height:15px;color:#1a1a1a;letter-spacing:-0.360px;right:818.36px;">191,850</span>
<span class="t " style="top:775.32px;font-size:11px;line-height:15px;color:#1a1a1a;letter-spacing:-0.360px;right:717.36px;">100%</span>
<span class="t " style="top:797.46px;font-size:11px;line-height:15px;color:#1a1a1a;letter-spacing:-0.360px;left:230.70px;">99</span>
<span class="t " style="top:797.46px;font-size:11px;line-height:15px;color:#3b34c4;letter-spacing:-0.400px;left:288.30px;text-decoration:underline;">60640:300:120</span>
<span class="t " style="top:796.66px;font-size:11px;line-height:15px;color:#1a1a1a;letter-spacing:-0.360px;left:380.30px;">Amortization Expense:Admin Boston</span>
<span class="t " style="top:797.46px;font-size:11px;line-height:15px;color:#1a1a1a;letter-spacing:-0.360px;right:1022.46px;">3,277</span>
<span class="t " style="top:797.46px;font-size:11px;line-height:15px;color:#1a1a1a;letter-spacing:-0.360px;right:920.06px;">196,021</span>
<span class="t " style="top:797.46px;font-size:11px;line-height:15px;color:#1a1a1a;letter-spacing:-0.360px;right:818.36px;">196,021</span>
<span class="t " style="top:797.46px;font-size:11px;line-height:15px;color:#1a1a1a;letter-spacing:-0.360px;right:717.36px;">100%</span>
<span class="t " style="top:819.59px;font-size:11px;line-height:15px;color:#1a1a1a;letter-spacing:-0.360px;left:230.70px;">100</span>
<span class="t " style="top:819.59px;font-size:11px;line-height:15px;color:#3b34c4;letter-spacing:-0.400px;left:288.30px;text-decoration:underline;">60640:300:210</span>
<span class="t " style="top:818.79px;font-size:11px;line-height:15px;color:#1a1a1a;letter-spacing:-0.360px;left:380.30px;">Amortization Expense:Admin Dallas</span>
<span class="t " style="top:819.59px;font-size:11px;line-height:15px;color:#1a1a1a;letter-spacing:-0.360px;right:1022.46px;">7,675</span>
<span class="t " style="top:819.59px;font-size:11px;line-height:15px;color:#1a1a1a;letter-spacing:-0.360px;right:920.06px;">189,612</span>
<span class="t " style="top:819.59px;font-size:11px;line-height:15px;color:#1a1a1a;letter-spacing:-0.360px;right:818.36px;">189,612</span>
<span class="t " style="top:819.59px;font-size:11px;line-height:15px;color:#1a1a1a;letter-spacing:-0.360px;right:717.36px;">100%</span>
<span class="t " style="top:841.73px;font-size:11px;line-height:15px;color:#1a1a1a;letter-spacing:-0.360px;left:230.70px;">101</span>
<span class="t " style="top:841.73px;font-size:11px;line-height:15px;color:#3b34c4;letter-spacing:-0.400px;left:288.30px;text-decoration:underline;">60640:300:220</span>
<span class="t " style="top:840.93px;font-size:11px;line-height:15px;color:#1a1a1a;letter-spacing:-0.360px;left:380.30px;">Amortization Expense:Admin San Francisco</span>
<span class="t " style="top:841.73px;font-size:11px;line-height:15px;color:#1a1a1a;letter-spacing:-0.360px;right:1022.46px;">3,820</span>
<span class="t " style="top:841.73px;font-size:11px;line-height:15px;color:#1a1a1a;letter-spacing:-0.360px;right:920.06px;">138,174</span>
<span class="t " style="top:841.73px;font-size:11px;line-height:15px;color:#1a1a1a;letter-spacing:-0.360px;right:818.36px;">138,174</span>
<span class="t " style="top:841.73px;font-size:11px;line-height:15px;color:#1a1a1a;letter-spacing:-0.360px;right:717.36px;">100%</span>
<span class="t " style="top:863.86px;font-size:11px;line-height:15px;color:#1a1a1a;letter-spacing:-0.360px;left:230.70px;">102</span>
<span class="t " style="top:863.86px;font-size:11px;line-height:15px;color:#3b34c4;letter-spacing:-0.400px;left:288.30px;text-decoration:underline;">60640:300:300</span>
<span class="t " style="top:863.06px;font-size:11px;line-height:15px;color:#1a1a1a;letter-spacing:-0.360px;left:380.30px;">Amortization Expense:Admin USA3</span>
<span class="t " style="top:863.86px;font-size:11px;line-height:15px;color:#1a1a1a;letter-spacing:-0.360px;right:1022.46px;">2,793</span>
<span class="t " style="top:862.86px;font-size:11px;line-height:15px;color:#1a1a1a;letter-spacing:-0.360px;right:920.06px;">-</span>
<span class="t " style="top:862.86px;font-size:11px;line-height:15px;color:#1a1a1a;letter-spacing:-0.360px;right:818.36px;">-</span>
<span class="t " style="top:862.86px;font-size:11px;line-height:15px;color:#1a1a1a;letter-spacing:-0.360px;right:717.36px;">-</span>
<svg style="left:207px;top:291.3px" width="6" height="9" viewBox="0 0 6 9"><path d="M0.5 0.3L5.5 4.5L0.5 8.7Z" fill="#050a14"/></svg>
<div class="r" style="left:1737.50px;top:219.50px;width:15.80px;height:14.80px;background:#f2f2f2;border:1px solid #fff;border-right-color:#8a8a8a;border-bottom-color:#8a8a8a;"></div>
<svg style="left:1742px;top:224.5px" width="7" height="4" viewBox="0 0 7 4"><path d="M3.5 0L7 4L0 4Z" fill="#000"/></svg>
<div class="r" style="left:1738.30px;top:635.50px;width:14.40px;height:106.50px;background:#efefef;border:1px solid #fafafa;border-right-color:#8f8f8f;border-bottom-color:#8f8f8f;"></div>
<div class="r" style="left:1753.00px;top:218.30px;width:1.00px;height:652.00px;background:#bdbdbd;"></div>
<svg style="left:0;top:0" width="1769" height="870" viewBox="0 0 1769 870"><path d="M1.9 15.6 a1.3 1.3 0 0 1 1.3-1.3 h5 a1.5 1.5 0 0 1 1.1 0.5 l1.9 2.1 h8 a1.5 1.5 0 0 1 1.5 1.5 v9.4 a1.5 1.5 0 0 1-1.5 1.5 h-15.8 a1.5 1.5 0 0 1-1.5-1.5 z" stroke="#1f3156" stroke-width="1.8" fill="none" stroke-linejoin="round" stroke-linecap="round" /><path d="M15 20.3 L17.7 23 L15 25.7 L12.3 23 Z" stroke="#1f3156" stroke-width="0.5" fill="#1f3156" stroke-linejoin="round" stroke-linecap="round" /><rect x="53.3" y="13.8" width="14.6" height="13" rx="1" fill="none" stroke="#1f3156" stroke-width="1.6"/><rect x="53.3" y="13.2" width="14.6" height="2.8" rx="0.8" fill="#1f3156" stroke="none" stroke-width="0"/><path d="M58.2 15 V26.5 M63.2 15 V21 M53.5 19.4 H68 M53.5 23.3 H60" stroke="#1f3156" stroke-width="1.4" fill="none" stroke-linejoin="round" stroke-linecap="round" /><circle cx="65.7" cy="25.4" r="5.6" stroke="#1f3156" stroke-width="1.6" fill="#dbeafa"/><path d="M127.3 12.8 h8.8 l5.6 5.6 v12.4 a1.2 1.2 0 0 1 -1.2 1.2 h-13.2 a1.2 1.2 0 0 1 -1.2-1.2 v-16.8 a1.2 1.2 0 0 1 1.2-1.2 z" stroke="#1f3156" stroke-width="1.8" fill="none" stroke-linejoin="round" stroke-linecap="round" /><path d="M136.1 13 v5.4 h5.4" stroke="#1f3156" stroke-width="1.6" fill="none" stroke-linejoin="round" stroke-linecap="round" /><path d="M126.5 24.7 H142" stroke="#1f3156" stroke-width="1.6" fill="none" stroke-linejoin="round" stroke-linecap="round" /><rect x="130.2" y="20.2" width="2.8" height="4.5" rx="0" fill="#1f3156" stroke="none" stroke-width="0"/><circle cx="131.6" cy="19.3" r="1.2" stroke="#1f3156" stroke-width="0" fill="#1f3156"/><rect x="135.8" y="24.7" width="2.8" height="3.4" rx="0" fill="#1f3156" stroke="none" stroke-width="0"/><path d="M206.1 12.8 h8.8 l5.6 5.6 v12.4 a1.2 1.2 0 0 1 -1.2 1.2 h-13.2 a1.2 1.2 0 0 1 -1.2-1.2 v-16.8 a1.2 1.2 0 0 1 1.2-1.2 z" stroke="#1f3156" stroke-width="1.8" fill="none" stroke-linejoin="round" stroke-linecap="round" /><path d="M214.9 13 v5.4 h5.4" stroke="#1f3156" stroke-width="1.6" fill="none" stroke-linejoin="round" stroke-linecap="round" /><rect x="208.2" y="21.2" width="2.2" height="6.8" rx="1" fill="#1f3156" stroke="none" stroke-width="0"/><rect x="211.8" y="23" width="2.2" height="5" rx="1" fill="#1f3156" stroke="none" stroke-width="0"/><rect x="215.4" y="24.6" width="2.2" height="3.4" rx="1" fill="#1f3156" stroke="none" stroke-width="0"/><path d="M1329.6 13.6 a5.2 5.2 0 0 0 -6.2 6.6 l-8.6 8.6 a1.9 1.9 0 0 0 2.7 2.7 l8.6 -8.6 a5.2 5.2 0 0 0 6.6 -6.2 l-3.3 3.3 l-2.9 -0.6 l-0.6 -2.9 z" stroke="#1f3156" stroke-width="1.6" fill="none" stroke-linejoin="round" stroke-linecap="round" /><path d="M1392.58 20.80 L1392.58 23.80 L1390.30 24.03 L1389.41 26.17 L1390.87 27.94 L1388.74 30.07 L1386.97 28.61 L1384.83 29.50 L1384.60 31.78 L1381.60 31.78 L1381.37 29.50 L1379.23 28.61 L1377.46 30.07 L1375.33 27.94 L1376.79 26.17 L1375.90 24.03 L1373.62 23.80 L1373.62 20.80 L1375.90 20.57 L1376.79 18.43 L1375.33 16.66 L1377.46 14.53 L1379.23 15.99 L1381.37 15.10 L1381.60 12.82 L1384.60 12.82 L1384.83 15.10 L1386.97 15.99 L1388.74 14.53 L1390.87 16.66 L1389.41 18.43 L1390.30 20.57 Z" stroke="#1f3156" stroke-width="1.7" fill="none" stroke-linejoin="round" stroke-linecap="round" /><circle cx="1383.1" cy="22.3" r="3.5" stroke="#1f3156" stroke-width="1.7" fill="none"/><circle cx="1504.22" cy="19.1" r="2.0" stroke="#1f3156" stroke-width="0" fill="#1f3156"/><circle cx="1517.38" cy="19.1" r="2.0" stroke="#1f3156" stroke-width="0" fill="#1f3156"/><circle cx="1510.8" cy="30.5" r="2.0" stroke="#1f3156" stroke-width="0" fill="#1f3156"/><path d="M1506.44 16.67 A7.6 7.6 0 0 1 1514.60 16.32" stroke="#1f3156" stroke-width="1.7" fill="none" stroke-linejoin="round" stroke-linecap="round" /><path d="M1511.61 16.55 L1514.60 16.32 L1513.30 13.61" stroke="#1f3156" stroke-width="1.4" fill="none" stroke-linejoin="round" stroke-linecap="round" /><path d="M1518.37 22.24 A7.6 7.6 0 0 1 1514.83 29.35" stroke="#1f3156" stroke-width="1.7" fill="none" stroke-linejoin="round" stroke-linecap="round" /><path d="M1516.03 26.60 L1514.83 29.35 L1517.82 29.47" stroke="#1f3156" stroke-width="1.4" fill="none" stroke-linejoin="round" stroke-linecap="round" /><path d="M1507.23 29.61 A7.6 7.6 0 0 1 1503.20 22.63" stroke="#1f3156" stroke-width="1.7" fill="none" stroke-linejoin="round" stroke-linecap="round" /><path d="M1504.81 25.17 L1503.20 22.63 L1501.43 25.05" stroke="#1f3156" stroke-width="1.4" fill="none" stroke-linejoin="round" stroke-linecap="round" /><circle cx="1659.9" cy="19.6" r="2.7" stroke="#1f3156" stroke-width="1.5" fill="none"/><path d="M1654.6 29.4 v-1.6 a3.2 3.2 0 0 1 3.2-3.2 h4.2 a3.2 3.2 0 0 1 3.2 3.2 v1.6 z" stroke="#1f3156" stroke-width="1.5" fill="none" stroke-linejoin="round" stroke-linecap="round" /><circle cx="1653.2" cy="18.4" r="1.9" stroke="#1f3156" stroke-width="1.4" fill="none"/><circle cx="1666.6" cy="18.4" r="1.9" stroke="#1f3156" stroke-width="1.4" fill="none"/><path d="M1650.4 25.8 v-0.6 a2.4 2.4 0 0 1 2.4-2.4 h1.6" stroke="#1f3156" stroke-width="1.4" fill="none" stroke-linejoin="round" stroke-linecap="round" /><path d="M1669.4 25.8 v-0.6 a2.4 2.4 0 0 0 -2.4-2.4 h-1.6" stroke="#1f3156" stroke-width="1.4" fill="none" stroke-linejoin="round" stroke-linecap="round" /><circle cx="18.3" cy="97.2" r="3.5" stroke="#f4f8fc" stroke-width="1.9" fill="none"/><path d="M21.2 100.2 L24.4 103.4" stroke="#f4f8fc" stroke-width="2" fill="none" stroke-linejoin="round" stroke-linecap="round" /><path d="M31.8 98.4 L35 95.2 L38.2 98.4 M31.8 102 L35 98.8 L38.2 102" stroke="#f4f8fc" stroke-width="1.5" fill="none" stroke-linejoin="round" stroke-linecap="round" /><path d="M28.6 127.4 a4.4 4.4 0 0 1 7.8 -1.9" stroke="#c9fbe0" stroke-width="1.5" fill="none" stroke-linejoin="round" stroke-linecap="round" /><path d="M37 129.4 a4.4 4.4 0 0 1 -7.8 1.9" stroke="#c9fbe0" stroke-width="1.5" fill="none" stroke-linejoin="round" stroke-linecap="round" /><path d="M37.2 123.2 v2.9 h-2.9 z" stroke="#c9fbe0" stroke-width="0.8" fill="#c9fbe0" stroke-linejoin="round" stroke-linecap="round" /><path d="M28.4 133.6 v-2.9 h2.9 z" stroke="#c9fbe0" stroke-width="0.8" fill="#c9fbe0" stroke-linejoin="round" stroke-linecap="round" /><path d="M1713.1 93.2 h4.4 v4.536000000000001 h3.3999999999999995 L1715.3 104 L1709.7 97.736 h3.3999999999999995 z" fill="#08285f" stroke="#08285f" stroke-width="0.8" stroke-linejoin="round"/><circle cx="1743.2" cy="98.4" r="6.6" stroke="#1f3156" stroke-width="0" fill="#08285f"/><path d="M214.2 172.6 h7.2 l2.8 2.8 v6.8 a1.1 1.1 0 0 1 -1.1 1.1 h-8.9 a1.1 1.1 0 0 1 -1.1 -1.1 v-8.5 a1.1 1.1 0 0 1 1.1 -1.1 z" fill="#fff"/><rect x="215" y="174" width="5.2" height="2.6" rx="0.3" fill="#08285f" stroke="none" stroke-width="0"/><circle cx="218.7" cy="179.6" r="1.7" stroke="#1f3156" stroke-width="0" fill="#08285f"/><path d="M1595.5 199.4 h5.4 v5.543999999999983 h3.8999999999999995 L1598.2 212.6 L1591.6000000000001 204.944 h3.8999999999999995 z" fill="#08285f" stroke="#08285f" stroke-width="0.8" stroke-linejoin="round"/><rect x="1623" y="197.9" width="16.8" height="14.7" rx="1.8" fill="#08285f" stroke="none" stroke-width="0"/><rect x="1632.6" y="202.3" width="5.4" height="7.6" rx="0" fill="#e8eefa" stroke="none" stroke-width="0"/><rect x="1626" y="201.8" width="2" height="1.8" rx="0" fill="#e8eefa" stroke="none" stroke-width="0"/><rect x="1659.5" y="197.2" width="10.4" height="6" rx="0.8" fill="none" stroke="#08285f" stroke-width="1.8"/><rect x="1656.4" y="202.6" width="16.8" height="7.4" rx="1.6" fill="#08285f" stroke="none" stroke-width="0"/><rect x="1659.6" y="207.8" width="10.2" height="5" rx="0" fill="#f0f0f0" stroke="#08285f" stroke-width="1.7"/><circle cx="1670.6" cy="205" r="0.8" stroke="#1f3156" stroke-width="0" fill="#f0f0f0"/><path d="M1661.5 199.6 h6.4 M1661.5 201.4 h6.4" stroke="#08285f" stroke-width="0.8"/><path d="M1692 198.5 a1.2 1.2 0 0 1 1.2-1.2 h6.6 l4.9 4.9 v10 a1.2 1.2 0 0 1 -1.2 1.2 h-10.3 a1.2 1.2 0 0 1 -1.2-1.2 z" fill="#08285f"/><path d="M1700.2 197 v4.8 h4.8 z" fill="#f0f0f0" stroke="#f0f0f0" stroke-width="0.6"/><path d="M1700.9 197.4 v4.1 h4.0 z" fill="#08285f"/><path d="M1726.3 198.5 a1.2 1.2 0 0 1 1.2-1.2 h6.6 l4.9 4.9 v10 a1.2 1.2 0 0 1 -1.2 1.2 h-10.3 a1.2 1.2 0 0 1 -1.2-1.2 z" fill="#08285f"/><path d="M1734.5 197 v4.8 h4.8 z" fill="#f0f0f0" stroke="#f0f0f0" stroke-width="0.6"/><path d="M1735.2 197.4 v4.1 h4.0 z" fill="#08285f"/><path d="M1729.6 210.6 c2.2-0.8 3.6-3.4 3.6-6.6 c0 3.2 1.2 5 3.6 5.2 c-2.6 0 -5.4 0.6 -7.2 1.4 z" fill="none" stroke="#f0f0f0" stroke-width="1.1" stroke-linejoin="round"/><path d="M228.8 272.9 h7.4 M228.8 275.2 h7.4" stroke="#2a8a4c" stroke-width="1.5"/><path d="M655.6 272.9 h7.4 M655.6 275.2 h7.4" stroke="#2a8a4c" stroke-width="1.5"/><path d="M757.4 272.9 h7.4 M757.4 275.2 h7.4" stroke="#2a8a4c" stroke-width="1.5"/><path d="M859 272.9 h7.4 M859 275.2 h7.4" stroke="#2a8a4c" stroke-width="1.5"/><path d="M960.8 272.9 h7.4 M960.8 275.2 h7.4" stroke="#2a8a4c" stroke-width="1.5"/><path d="M1061.9 272.9 h7.4 M1061.9 275.2 h7.4" stroke="#2a8a4c" stroke-width="1.5"/><rect x="205.2" y="269.2" width="11.6" height="1.8" rx="0.5" fill="#08285f" stroke="none" stroke-width="0"/><rect x="208.6" y="266.8" width="4.8" height="2.6" rx="0.8" fill="none" stroke="#08285f" stroke-width="1.3"/><path d="M206.2 271.6 h9.6 l-0.6 8.2 a1 1 0 0 1 -1 0.9 h-6.4 a1 1 0 0 1 -1-0.9 z" fill="#08285f"/><path d="M208.9 273 v6 M211 273 v6 M213.1 273 v6" stroke="#f2f2f2" stroke-width="0.9"/><rect x="284.4" y="268.8" width="10" height="10" rx="0" fill="none" stroke="#2a8a4c" stroke-width="1.2"/><rect x="287" y="271.4" width="4.8" height="4.8" rx="0" fill="#3f7fd6" stroke="none" stroke-width="0"/><path d="M376.90000000000003 268.6 v9.6 h10" stroke="#1f7c42" stroke-width="1.4" fill="none"/><path d="M377.3 268.4 h9.6 v9.6" stroke="#9bd7ae" stroke-width="0.8" fill="none"/><path d="M1162.1999999999998 268.6 v9.6 h10" stroke="#1f7c42" stroke-width="1.4" fill="none"/><path d="M1162.6 268.4 h9.6 v9.6" stroke="#9bd7ae" stroke-width="0.8" fill="none"/><defs><linearGradient id="pg" x1="0" y1="0" x2="0" y2="1"><stop offset="0" stop-color="#f7f7f7"/><stop offset="1" stop-color="#d6d6d6"/></linearGradient></defs><path d="M1109 266.2 h6.4 l4.2 4 v10.2 h-10.6 z" fill="#e2e4ec"/><path d="M1113.6 278.4 l5.6 -7.2 l1.6 1.2 l-5.6 7.2 l-2 0.6 z" fill="#eab28c"/><path d="M1100 289.80 h7.6 l4.2 3.6 v8.9 h-11.8 z" fill="url(#pg)"/><path d="M1105.2 300.20 l7.2 -7.6 l1.5 1.3 l-7.2 7.6 l-2.1 0.7 z" fill="#e6c2aa"/><path d="M1100 311.94 h7.6 l4.2 3.6 v8.9 h-11.8 z" fill="url(#pg)"/><path d="M1105.2 322.33 l7.2 -7.6 l1.5 1.3 l-7.2 7.6 l-2.1 0.7 z" fill="#e6c2aa"/><path d="M1100 334.07 h7.6 l4.2 3.6 v8.9 h-11.8 z" fill="url(#pg)"/><path d="M1105.2 344.47 l7.2 -7.6 l1.5 1.3 l-7.2 7.6 l-2.1 0.7 z" fill="#e6c2aa"/><path d="M1100 356.21 h7.6 l4.2 3.6 v8.9 h-11.8 z" fill="url(#pg)"/><path d="M1105.2 366.61 l7.2 -7.6 l1.5 1.3 l-7.2 7.6 l-2.1 0.7 z" fill="#e6c2aa"/><path d="M1100 378.34 h7.6 l4.2 3.6 v8.9 h-11.8 z" fill="url(#pg)"/><path d="M1105.2 388.74 l7.2 -7.6 l1.5 1.3 l-7.2 7.6 l-2.1 0.7 z" fill="#e6c2aa"/><path d="M1100 400.48 h7.6 l4.2 3.6 v8.9 h-11.8 z" fill="url(#pg)"/><path d="M1105.2 410.88 l7.2 -7.6 l1.5 1.3 l-7.2 7.6 l-2.1 0.7 z" fill="#e6c2aa"/><path d="M1100 422.61 h7.6 l4.2 3.6 v8.9 h-11.8 z" fill="url(#pg)"/><path d="M1105.2 433.01 l7.2 -7.6 l1.5 1.3 l-7.2 7.6 l-2.1 0.7 z" fill="#e6c2aa"/><path d="M1100 444.75 h7.6 l4.2 3.6 v8.9 h-11.8 z" fill="url(#pg)"/><path d="M1105.2 455.14 l7.2 -7.6 l1.5 1.3 l-7.2 7.6 l-2.1 0.7 z" fill="#e6c2aa"/><path d="M1100 466.88 h7.6 l4.2 3.6 v8.9 h-11.8 z" fill="url(#pg)"/><path d="M1105.2 477.28 l7.2 -7.6 l1.5 1.3 l-7.2 7.6 l-2.1 0.7 z" fill="#e6c2aa"/><path d="M1100 489.01 h7.6 l4.2 3.6 v8.9 h-11.8 z" fill="url(#pg)"/><path d="M1105.2 499.41 l7.2 -7.6 l1.5 1.3 l-7.2 7.6 l-2.1 0.7 z" fill="#e6c2aa"/><path d="M1100 511.15 h7.6 l4.2 3.6 v8.9 h-11.8 z" fill="url(#pg)"/><path d="M1105.2 521.55 l7.2 -7.6 l1.5 1.3 l-7.2 7.6 l-2.1 0.7 z" fill="#e6c2aa"/><path d="M1100 533.29 h7.6 l4.2 3.6 v8.9 h-11.8 z" fill="url(#pg)"/><path d="M1105.2 543.69 l7.2 -7.6 l1.5 1.3 l-7.2 7.6 l-2.1 0.7 z" fill="#e6c2aa"/><path d="M1100 555.42 h7.6 l4.2 3.6 v8.9 h-11.8 z" fill="url(#pg)"/><path d="M1105.2 565.82 l7.2 -7.6 l1.5 1.3 l-7.2 7.6 l-2.1 0.7 z" fill="#e6c2aa"/><path d="M1100 577.56 h7.6 l4.2 3.6 v8.9 h-11.8 z" fill="url(#pg)"/><path d="M1105.2 587.96 l7.2 -7.6 l1.5 1.3 l-7.2 7.6 l-2.1 0.7 z" fill="#e6c2aa"/><path d="M1100 599.69 h7.6 l4.2 3.6 v8.9 h-11.8 z" fill="url(#pg)"/><path d="M1105.2 610.09 l7.2 -7.6 l1.5 1.3 l-7.2 7.6 l-2.1 0.7 z" fill="#e6c2aa"/><path d="M1100 621.83 h7.6 l4.2 3.6 v8.9 h-11.8 z" fill="url(#pg)"/><path d="M1105.2 632.23 l7.2 -7.6 l1.5 1.3 l-7.2 7.6 l-2.1 0.7 z" fill="#e6c2aa"/><path d="M1100 643.96 h7.6 l4.2 3.6 v8.9 h-11.8 z" fill="url(#pg)"/><path d="M1105.2 654.36 l7.2 -7.6 l1.5 1.3 l-7.2 7.6 l-2.1 0.7 z" fill="#e6c2aa"/><path d="M1100 666.10 h7.6 l4.2 3.6 v8.9 h-11.8 z" fill="url(#pg)"/><path d="M1105.2 676.50 l7.2 -7.6 l1.5 1.3 l-7.2 7.6 l-2.1 0.7 z" fill="#e6c2aa"/><path d="M1100 688.23 h7.6 l4.2 3.6 v8.9 h-11.8 z" fill="url(#pg)"/><path d="M1105.2 698.63 l7.2 -7.6 l1.5 1.3 l-7.2 7.6 l-2.1 0.7 z" fill="#e6c2aa"/><path d="M1100 710.37 h7.6 l4.2 3.6 v8.9 h-11.8 z" fill="url(#pg)"/><path d="M1105.2 720.76 l7.2 -7.6 l1.5 1.3 l-7.2 7.6 l-2.1 0.7 z" fill="#e6c2aa"/><path d="M1100 732.50 h7.6 l4.2 3.6 v8.9 h-11.8 z" fill="url(#pg)"/><path d="M1105.2 742.90 l7.2 -7.6 l1.5 1.3 l-7.2 7.6 l-2.1 0.7 z" fill="#e6c2aa"/><path d="M1100 754.63 h7.6 l4.2 3.6 v8.9 h-11.8 z" fill="url(#pg)"/><path d="M1105.2 765.03 l7.2 -7.6 l1.5 1.3 l-7.2 7.6 l-2.1 0.7 z" fill="#e6c2aa"/><path d="M1100 776.77 h7.6 l4.2 3.6 v8.9 h-11.8 z" fill="url(#pg)"/><path d="M1105.2 787.17 l7.2 -7.6 l1.5 1.3 l-7.2 7.6 l-2.1 0.7 z" fill="#e6c2aa"/><path d="M1100 798.90 h7.6 l4.2 3.6 v8.9 h-11.8 z" fill="url(#pg)"/><path d="M1105.2 809.30 l7.2 -7.6 l1.5 1.3 l-7.2 7.6 l-2.1 0.7 z" fill="#e6c2aa"/><path d="M1100 821.04 h7.6 l4.2 3.6 v8.9 h-11.8 z" fill="url(#pg)"/><path d="M1105.2 831.44 l7.2 -7.6 l1.5 1.3 l-7.2 7.6 l-2.1 0.7 z" fill="#e6c2aa"/><path d="M1100 843.17 h7.6 l4.2 3.6 v8.9 h-11.8 z" fill="url(#pg)"/><path d="M1105.2 853.57 l7.2 -7.6 l1.5 1.3 l-7.2 7.6 l-2.1 0.7 z" fill="#e6c2aa"/><path d="M1100 865.31 h7.6 l4.2 3.6 v8.9 h-11.8 z" fill="url(#pg)"/><path d="M1105.2 875.71 l7.2 -7.6 l1.5 1.3 l-7.2 7.6 l-2.1 0.7 z" fill="#e6c2aa"/><path d="M744.3 486.8 L744.3 511.8 L750.2 508 L753.8 514.5 L759 511.6 L756 505.8 L763.6 505.8 Z" fill="#ff1c1c" stroke="#1a0404" stroke-width="1.2" stroke-linejoin="round"/></svg>
<span class="t " style="top:19.95px;font-size:8.5px;line-height:12.5px;color:#1f3156;font-weight:bold;left:63.40px;">$</span>
<span class="t " style="top:9.90px;font-size:22px;line-height:26px;color:#0d1830;font-weight:bold;left:1588.20px;transform:scaleX(1.05);transform-origin:0 50%;">$</span>
<span class="t " style="top:91.70px;font-size:11px;line-height:15px;color:#cfe2fa;font-weight:bold;left:1740.40px;">?</span>
<span class="t " style="top:201.05px;font-size:11.5px;line-height:15.5px;color:#f0f0f0;font-weight:bold;left:1695.40px;">x</span>
<span class="t " style="top:267.20px;font-size:10px;line-height:14px;color:#2e7fd0;left:378.60px;">A</span>
<span class="t " style="top:267.20px;font-size:10px;line-height:14px;color:#2e7fd0;left:1163.90px;">A</span>
<div class="r" style="left:0.00px;top:779.00px;width:1769.00px;height:91.00px;background:linear-gradient(rgba(0,0,0,0),rgba(0,0,0,0.45));z-index:50;"></div>
</body></html>
